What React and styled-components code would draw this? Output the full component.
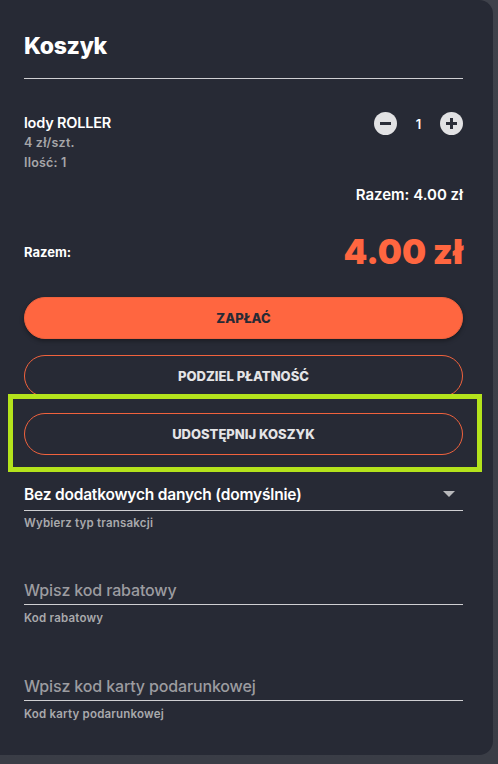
import React from "react";
import styled, { createGlobalStyle } from "styled-components";

const GlobalStyle = createGlobalStyle`
  html, body {
    margin: 0;
    padding: 0;
    background: #3c3f48;
    font-family: Inter, Lato, sans-serif;
  }
  * { box-sizing: border-box; }
`;

const Page = styled.div`
  width: 498px;
  height: 764px;
  overflow: hidden;
  background: linear-gradient(180deg, #3f424b 0%, #3a3d46 100%);
`;

const Card = styled.section`
  width: 493px;
  height: 755px;
  background: #272a35;
  border-radius: 0 14px 14px 0;
  padding: 31px 30px 0 24px;
  display: flex;
  flex-direction: column;
  color: #fff;
`;

const Header = styled.header`
  padding-bottom: 17px;
  border-bottom: 1px solid #cfcfd2;
`;

const Title = styled.h2`
  margin: 0;
  font-size: 23px;
  line-height: 30px;
  font-weight: 800;
  letter-spacing: -0.3px;
`;

const ItemRow = styled.div`
  margin-top: 34px;
  display: flex;
  justify-content: space-between;
  align-items: flex-start;
`;

const ItemInfo = styled.div`
  display: flex;
  flex-direction: column;
`;

const ItemName = styled.div`
  font-size: 14.5px;
  line-height: 20px;
  font-weight: 600;
  letter-spacing: -0.2px;
`;

const ItemMeta = styled.div`
  font-size: 12.5px;
  line-height: 20px;
  font-weight: 600;
  letter-spacing: 0.2px;
  color: #a6a6a9;
`;

const Qty = styled.div`
  display: flex;
  align-items: center;
  margin-top: -1px;
`;

const QtyButton = styled.button`
  width: 23px;
  height: 23px;
  border-radius: 50%;
  border: none;
  padding: 0;
  background: #e2e2e4;
  display: flex;
  align-items: center;
  justify-content: center;
  cursor: pointer;
`;

const QtyValue = styled.span`
  width: 43px;
  text-align: center;
  font-size: 13px;
  font-weight: 600;
`;

const Subtotal = styled.div`
  margin-top: 12px;
  text-align: right;
  font-size: 15px;
  line-height: 20px;
  font-weight: 600;
`;

const TotalRow = styled.div`
  margin-top: 26px;
  height: 40px;
  display: flex;
  justify-content: space-between;
  align-items: center;
`;

const TotalLabel = styled.span`
  font-size: 13px;
  font-weight: 700;
  margin-top: 2px;
`;

const TotalValue = styled.span`
  font-size: 34px;
  font-weight: 900;
  color: #ff6640;
`;

const Button = styled.button`
  display: block;
  width: 100%;
  height: 42px;
  margin-top: ${(p) => p.$mt ?? 16}px;
  border-radius: 21px;
  font-family: Inter, sans-serif;
  font-size: 13px;
  font-weight: 800;
  text-transform: uppercase;
  cursor: pointer;
  border: 1px solid #f0623d;
  background: ${(p) => (p.$primary ? "#ff6640" : "transparent")};
  color: ${(p) => (p.$primary ? "#272a35" : "#e4e4e6")};
  box-shadow: ${(p) => (p.$primary ? "0 2px 4px rgba(0,0,0,0.35)" : "none")};
`;

const Highlight = styled.div`
  margin: -3px -19px 0 -16px;
  border: 5px solid #b4e31c;
  padding: 14px 14px 12px 11px;
`;

const Field = styled.div`
  margin-top: ${(p) => p.$mt}px;
`;

const FieldBox = styled.div`
  height: 29px;
  border-bottom: 1px solid #cfcfd2;
  display: flex;
  align-items: center;
  justify-content: space-between;
`;

const SelectValue = styled.span`
  font-size: 15.5px;
  font-weight: 600;
  letter-spacing: -0.2px;
  color: #fff;
  margin-top: -3px;
`;

const Arrow = styled.span`
  width: 0;
  height: 0;
  margin-right: 8px;
  margin-top: -4px;
  border-left: 6px solid transparent;
  border-right: 6px solid transparent;
  border-top: 6px solid #b9b9bc;
`;

const TextInput = styled.input`
  width: 100%;
  height: 28px;
  border: none;
  outline: none;
  background: transparent;
  padding: 0;
  font-family: Inter, sans-serif;
  font-size: 16px;
  font-weight: 500;
  letter-spacing: -0.15px;
  color: #fff;
  &::placeholder {
    color: #9c9ca0;
  }
`;

const Helper = styled.div`
  margin-top: ${(p) => p.$mt ?? 5}px;
  font-size: 11.5px;
  line-height: 16px;
  font-weight: 600;
  letter-spacing: 0.2px;
  color: #a9a9ac;
`;

const MinusIcon = () => (
  <svg width="13" height="13" viewBox="0 0 13 13">
    <rect x="1" y="5" width="11" height="3" fill="#2b2e38" />
  </svg>
);

const PlusIcon = () => (
  <svg width="13" height="13" viewBox="0 0 13 13">
    <rect x="1" y="5" width="11" height="3" fill="#2b2e38" />
    <rect x="5" y="1" width="3" height="11" fill="#2b2e38" />
  </svg>
);

export default function App() {
  return (
    <Page>
      <GlobalStyle />
      <Card>
        <Header>
          <Title>Koszyk</Title>
        </Header>

        <ItemRow>
          <ItemInfo>
            <ItemName>lody ROLLER</ItemName>
            <ItemMeta>4 zł/szt.</ItemMeta>
            <ItemMeta>Ilość: 1</ItemMeta>
          </ItemInfo>
          <Qty>
            <QtyButton aria-label="minus">
              <MinusIcon />
            </QtyButton>
            <QtyValue>1</QtyValue>
            <QtyButton aria-label="plus">
              <PlusIcon />
            </QtyButton>
          </Qty>
        </ItemRow>
        <Subtotal>Razem: 4.00 zł</Subtotal>

        <TotalRow>
          <TotalLabel>Razem:</TotalLabel>
          <TotalValue>4.00 zł</TotalValue>
        </TotalRow>

        <Button $primary $mt={26}>Zapłać</Button>
        <Button>Podziel płatność</Button>
        <Highlight>
          <Button $mt={0}>Udostępnij koszyk</Button>
        </Highlight>

        <Field $mt={10}>
          <FieldBox>
            <SelectValue>Bez dodatkowych danych (domyślnie)</SelectValue>
            <Arrow />
          </FieldBox>
          <Helper $mt={4}>Wybierz typ transakcji</Helper>
        </Field>

        <Field $mt={45}>
          <FieldBox>
            <TextInput placeholder="Wpisz kod rabatowy" />
          </FieldBox>
          <Helper>Kod rabatowy</Helper>
        </Field>

        <Field $mt={46}>
          <FieldBox>
            <TextInput placeholder="Wpisz kod karty podarunkowej" />
          </FieldBox>
          <Helper>Kod karty podarunkowej</Helper>
        </Field>
      </Card>
    </Page>
  );
}
